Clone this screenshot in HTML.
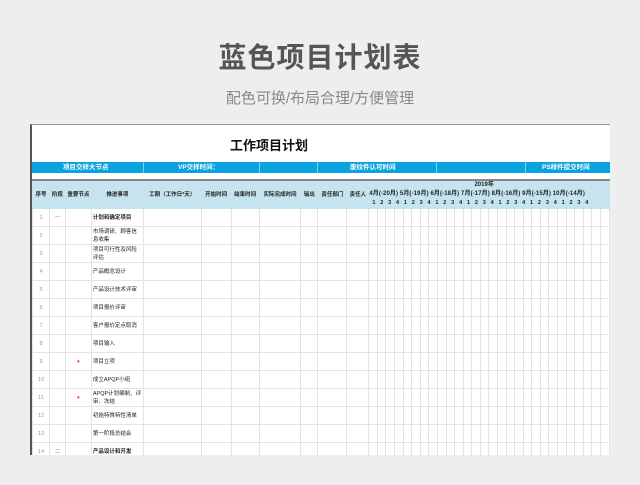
<!DOCTYPE html>
<html><head><meta charset="utf-8"><style>
*{margin:0;padding:0;box-sizing:border-box}
body{width:640px;height:485px;background:#eeeeee;font-family:"Liberation Sans","Noto Sans CJK SC",sans-serif;position:relative;overflow:hidden}
.t1{position:absolute;top:36px;left:0;width:640px;text-align:center;font-size:28px;color:#555;font-weight:bold;letter-spacing:1px}
.t2{position:absolute;top:87px;left:0;width:640px;text-align:center;font-size:15px;color:#888}
.sheet{position:absolute;left:30px;top:124px;width:580px;height:331px;background:#fff;border-left:2px solid #555;border-top:1px solid #999;overflow:hidden}
.h{position:absolute;left:198px;top:10px;font-size:13px;font-weight:bold;color:#111}
.blue{position:absolute;left:0;top:37px;width:580px;height:11px;background:#0aa3e0;color:#fff;font-size:6.5px;font-weight:bold;line-height:11px}
.blue span{position:absolute;top:0}
.bl{position:absolute;top:0;width:1px;height:11px;background:#7fd0f0}
table{position:absolute;left:0;top:54px;border-collapse:collapse;table-layout:fixed;font-size:5.5px;color:#222}
td{border:1px solid #e4e4e4;height:18px;padding:0 1px;vertical-align:middle;overflow:hidden;line-height:8px}
tr.hd td{background:#c6e4ef;border-color:#c6e4ef;font-weight:bold;text-align:center;height:28px}
tr.hd{border-top:2px solid #888}
.n{color:#999;text-align:center}
.b{font-weight:bold}
.r{color:#e33;text-align:center;font-size:8px}
</style></head><body>
<div class="t1">蓝色项目计划表</div>
<div class="t2">配色可换/布局合理/方便管理</div>
<div class="sheet">
<div class="h">工作项目计划</div>
<div class="blue">
<span style="left:31px">项目交样大节点</span>
<div class="bl" style="left:111px"></div>
<span style="left:146px">VP交样时间：</span>
<div class="bl" style="left:227px"></div>
<div class="bl" style="left:285px"></div>
<span style="left:318px">废纹件认可时间</span>
<div class="bl" style="left:404px"></div>
<div class="bl" style="left:493px"></div>
<span style="left:510px">PS样件提交时间</span>
</div>
<table>
<colgroup>
<col style="width:17px"><col style="width:16px"><col style="width:26px"><col style="width:52px"><col style="width:58px"><col style="width:30px"><col style="width:28px"><col style="width:42px"><col style="width:17px"><col style="width:29px"><col style="width:22px">
<col style="width:8.6px"><col style="width:8.6px"><col style="width:8.6px"><col style="width:8.6px"><col style="width:8.6px"><col style="width:8.6px"><col style="width:8.6px"><col style="width:8.6px"><col style="width:8.6px"><col style="width:8.6px"><col style="width:8.6px"><col style="width:8.6px"><col style="width:8.6px"><col style="width:8.6px"><col style="width:8.6px"><col style="width:8.6px"><col style="width:8.6px"><col style="width:8.6px"><col style="width:8.6px"><col style="width:8.6px"><col style="width:8.6px"><col style="width:8.6px"><col style="width:8.6px"><col style="width:8.6px"><col style="width:8.6px"><col style="width:8.6px"><col style="width:8.6px"><col style="width:8.6px">
</colgroup>
<tr class="hd"><td>序号</td><td>阶段</td><td>重要节点</td><td>推进事项</td><td>工期（工作日*天）</td><td>开始时间</td><td>结束时间</td><td>实际完成时间</td><td>输出</td><td>责任部门</td><td>责任人</td>
<td colspan="28" style="padding:0;white-space:nowrap;font-size:6px;line-height:9px;text-align:left"><div style="text-align:center;padding-right:10px">2019年</div><div style="letter-spacing:0.1px">4月(-20月) 5月(-19月) 6月(-18月) 7月(-17月) 8月(-16月) 9月(-15月) 10月(-14月)</div><div style="word-spacing:3.3px;padding-left:3px;font-size:5.5px">1 2 3 4 1 2 3 4 1 2 3 4 1 2 3 4 1 2 3 4 1 2 3 4 1 2 3 4</div></td></tr>
<tr><td class="n">1</td><td class="n">一</td><td></td><td class="b">计划和确定项目</td><td></td><td></td><td></td><td></td><td></td><td></td><td></td><td></td><td></td><td></td><td></td><td></td><td></td><td></td><td></td><td></td><td></td><td></td><td></td><td></td><td></td><td></td><td></td><td></td><td></td><td></td><td></td><td></td><td></td><td></td><td></td><td></td><td></td><td></td><td></td></tr>
<tr><td class="n">2</td><td></td><td></td><td>市场调研、顾客信息收集</td><td></td><td></td><td></td><td></td><td></td><td></td><td></td><td></td><td></td><td></td><td></td><td></td><td></td><td></td><td></td><td></td><td></td><td></td><td></td><td></td><td></td><td></td><td></td><td></td><td></td><td></td><td></td><td></td><td></td><td></td><td></td><td></td><td></td><td></td><td></td></tr>
<tr><td class="n">3</td><td></td><td></td><td>项目可行性及风险评估</td><td></td><td></td><td></td><td></td><td></td><td></td><td></td><td></td><td></td><td></td><td></td><td></td><td></td><td></td><td></td><td></td><td></td><td></td><td></td><td></td><td></td><td></td><td></td><td></td><td></td><td></td><td></td><td></td><td></td><td></td><td></td><td></td><td></td><td></td><td></td></tr>
<tr><td class="n">4</td><td></td><td></td><td>产品概念设计</td><td></td><td></td><td></td><td></td><td></td><td></td><td></td><td></td><td></td><td></td><td></td><td></td><td></td><td></td><td></td><td></td><td></td><td></td><td></td><td></td><td></td><td></td><td></td><td></td><td></td><td></td><td></td><td></td><td></td><td></td><td></td><td></td><td></td><td></td><td></td></tr>
<tr><td class="n">5</td><td></td><td></td><td>产品设计技术评审</td><td></td><td></td><td></td><td></td><td></td><td></td><td></td><td></td><td></td><td></td><td></td><td></td><td></td><td></td><td></td><td></td><td></td><td></td><td></td><td></td><td></td><td></td><td></td><td></td><td></td><td></td><td></td><td></td><td></td><td></td><td></td><td></td><td></td><td></td><td></td></tr>
<tr><td class="n">6</td><td></td><td></td><td>项目报价评审</td><td></td><td></td><td></td><td></td><td></td><td></td><td></td><td></td><td></td><td></td><td></td><td></td><td></td><td></td><td></td><td></td><td></td><td></td><td></td><td></td><td></td><td></td><td></td><td></td><td></td><td></td><td></td><td></td><td></td><td></td><td></td><td></td><td></td><td></td><td></td></tr>
<tr><td class="n">7</td><td></td><td></td><td>客户报价定点取消</td><td></td><td></td><td></td><td></td><td></td><td></td><td></td><td></td><td></td><td></td><td></td><td></td><td></td><td></td><td></td><td></td><td></td><td></td><td></td><td></td><td></td><td></td><td></td><td></td><td></td><td></td><td></td><td></td><td></td><td></td><td></td><td></td><td></td><td></td><td></td></tr>
<tr><td class="n">8</td><td></td><td></td><td>项目输入</td><td></td><td></td><td></td><td></td><td></td><td></td><td></td><td></td><td></td><td></td><td></td><td></td><td></td><td></td><td></td><td></td><td></td><td></td><td></td><td></td><td></td><td></td><td></td><td></td><td></td><td></td><td></td><td></td><td></td><td></td><td></td><td></td><td></td><td></td><td></td></tr>
<tr><td class="n">9</td><td></td><td class="r">•</td><td>项目立项</td><td></td><td></td><td></td><td></td><td></td><td></td><td></td><td></td><td></td><td></td><td></td><td></td><td></td><td></td><td></td><td></td><td></td><td></td><td></td><td></td><td></td><td></td><td></td><td></td><td></td><td></td><td></td><td></td><td></td><td></td><td></td><td></td><td></td><td></td><td></td></tr>
<tr><td class="n">10</td><td></td><td></td><td>成立APQP小组</td><td></td><td></td><td></td><td></td><td></td><td></td><td></td><td></td><td></td><td></td><td></td><td></td><td></td><td></td><td></td><td></td><td></td><td></td><td></td><td></td><td></td><td></td><td></td><td></td><td></td><td></td><td></td><td></td><td></td><td></td><td></td><td></td><td></td><td></td><td></td></tr>
<tr><td class="n">11</td><td></td><td class="r">•</td><td>APQP计划编制、评审、冻结</td><td></td><td></td><td></td><td></td><td></td><td></td><td></td><td></td><td></td><td></td><td></td><td></td><td></td><td></td><td></td><td></td><td></td><td></td><td></td><td></td><td></td><td></td><td></td><td></td><td></td><td></td><td></td><td></td><td></td><td></td><td></td><td></td><td></td><td></td><td></td></tr>
<tr><td class="n">12</td><td></td><td></td><td>初始特殊特性清单</td><td></td><td></td><td></td><td></td><td></td><td></td><td></td><td></td><td></td><td></td><td></td><td></td><td></td><td></td><td></td><td></td><td></td><td></td><td></td><td></td><td></td><td></td><td></td><td></td><td></td><td></td><td></td><td></td><td></td><td></td><td></td><td></td><td></td><td></td><td></td></tr>
<tr><td class="n">13</td><td></td><td></td><td>第一阶段总结会</td><td></td><td></td><td></td><td></td><td></td><td></td><td></td><td></td><td></td><td></td><td></td><td></td><td></td><td></td><td></td><td></td><td></td><td></td><td></td><td></td><td></td><td></td><td></td><td></td><td></td><td></td><td></td><td></td><td></td><td></td><td></td><td></td><td></td><td></td><td></td></tr>
<tr><td class="n">14</td><td class="n">二</td><td></td><td class="b">产品设计和开发</td><td></td><td></td><td></td><td></td><td></td><td></td><td></td><td></td><td></td><td></td><td></td><td></td><td></td><td></td><td></td><td></td><td></td><td></td><td></td><td></td><td></td><td></td><td></td><td></td><td></td><td></td><td></td><td></td><td></td><td></td><td></td><td></td><td></td><td></td><td></td></tr>
</table>
</div>
</body></html>
